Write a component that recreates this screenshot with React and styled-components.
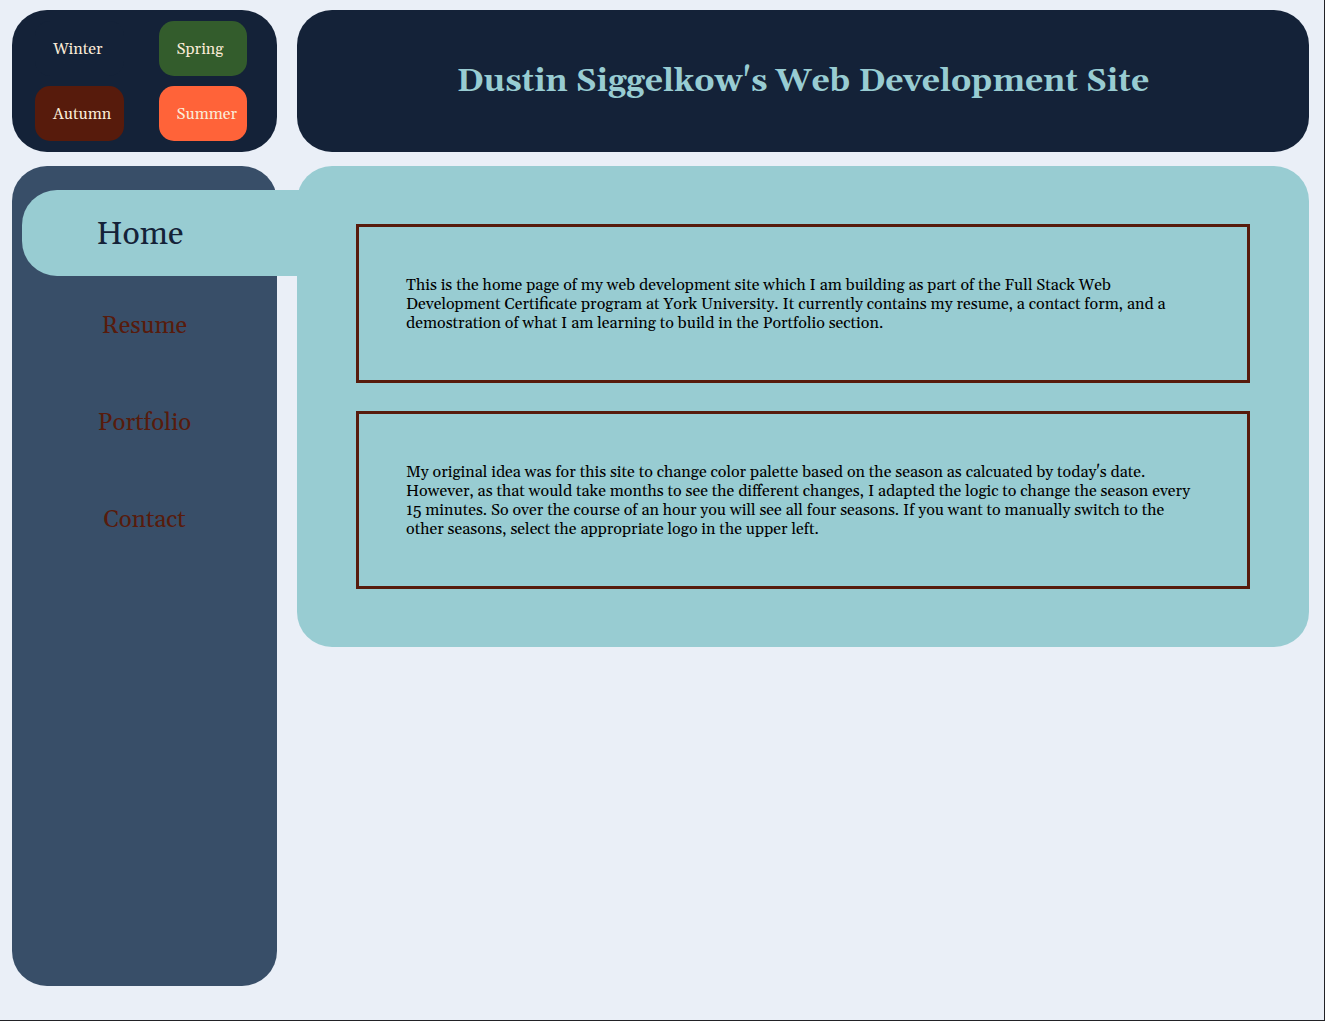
import React, { useState } from "react";
import styled, { createGlobalStyle } from "styled-components";

const navy = "#142238";
const slate = "#384e68";
const teal = "#98ccd2";
const brown = "#571b0c";
const cream = "#faebd7";

const GlobalStyle = createGlobalStyle`
  * { box-sizing: border-box; }
  body {
    margin: 0;
    background: #eaeff7;
    font-family: Georgia, Gelasio, "Liberation Serif", serif;
    font-size: 16px;
    line-height: 19px;
  }
`;

const Page = styled.div`
  display: grid;
  grid-template-columns: 20vw 1fr;
  grid-template-rows: auto 1fr;
  gap: 14px 20px;
  min-height: 100vh;
  padding: 10px 15px 34px 12px;
  border: solid #222226;
  border-width: 0 1px 1px 0;
`;

const Seasons = styled.div`
  display: grid;
  grid-template-columns: 1fr 1fr;
  gap: 10px 35px;
  padding: 11px 30px 11px 23px;
  background: ${navy};
  border-radius: 35px;
`;

const SeasonButton = styled.button`
  height: 55px;
  padding: 2px 0 0 18px;
  border: 0;
  border-radius: 15px;
  background: ${(p) => p.$color};
  color: ${cream};
  font: inherit;
  text-align: left;
  white-space: nowrap;
  cursor: pointer;
`;

const Header = styled.header`
  display: flex;
  align-items: center;
  justify-content: center;
  padding-top: 2px;
  background: ${navy};
  border-radius: 35px;
`;

const Title = styled.h1`
  margin: 0;
  color: ${teal};
  font-size: 32px;
  line-height: 36px;
`;

const Sidebar = styled.nav`
  padding: 24px 0 0 10px;
  background: ${slate};
  border-radius: 35px;
`;

const NavLink = styled.a`
  display: flex;
  align-items: center;
  justify-content: center;
  height: 97px;
  padding: 2px 10px 0 0;
  color: ${brown};
  font-size: 24px;
  line-height: 28px;
  text-decoration: none;

  &[aria-current="page"] {
    height: 86px;
    margin-right: -30px;
    padding: 4px 49px 0 0;
    border-radius: 35px 0 0 35px;
    background: ${teal};
    color: ${navy};
    font-size: 32px;
    line-height: 36px;
  }
`;

const Main = styled.main`
  display: flex;
  flex-direction: column;
  align-self: start;
  gap: 28px;
  padding: 58px 59px;
  background: ${teal};
  border-radius: 35px;
`;

const Notice = styled.p`
  margin: 0;
  padding: 49px 47px 47px;
  border: 3px solid ${brown};
  color: #000;
`;

const seasons = [
  ["Winter", navy],
  ["Spring", "#335c2c"],
  ["Autumn", brown],
  ["Summer", "#ff6339"],
];

const pages = ["Home", "Resume", "Portfolio", "Contact"];

export default function App() {
  const [season, setSeason] = useState("Winter");
  return (
    <>
      <GlobalStyle />
      <Page>
        <Seasons>
          {seasons.map(([name, color]) => (
            <SeasonButton
              key={name}
              type="button"
              $color={color}
              aria-pressed={season === name}
              onClick={() => setSeason(name)}
            >
              {name}
            </SeasonButton>
          ))}
        </Seasons>
        <Header>
          <Title>Dustin Siggelkow's Web Development Site</Title>
        </Header>
        <Sidebar>
          {pages.map((name) => (
            <NavLink
              key={name}
              href={`#${name.toLowerCase()}`}
              aria-current={name === "Home" ? "page" : undefined}
            >
              {name}
            </NavLink>
          ))}
        </Sidebar>
        <Main>
          <Notice>
            This is the home page of my web development site which I am building
            as part of the Full Stack Web Development Certificate program at
            York University. It currently contains my resume, a contact form,
            and a demostration of what I am learning to build in the Portfolio
            section.
          </Notice>
          <Notice>
            My original idea was for this site to change color palette based on
            the season as calcuated by today's date. However, as that would take
            months to see the different changes, I adapted the logic to change
            the season every 15 minutes. So over the course of an hour you will
            see all four seasons. If you want to manually switch to the other
            seasons, select the appropriate logo in the upper left.
          </Notice>
        </Main>
      </Page>
    </>
  );
}
